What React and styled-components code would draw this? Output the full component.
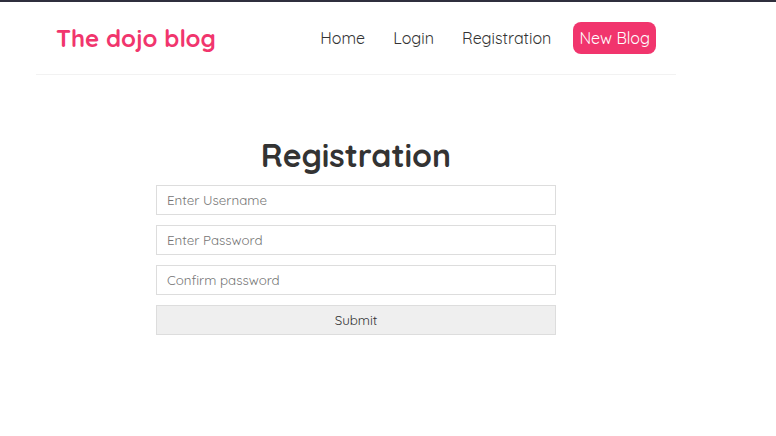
import React from 'react';
import styled, { createGlobalStyle } from 'styled-components';

const GlobalStyle = createGlobalStyle`
  * { margin: 0; box-sizing: border-box; font-family: Quicksand, Lato, sans-serif; }
  body { color: #333; background: #fff; border-top: 2px solid #2f2f3d; }
`;

const Page = styled.div`
  padding: 0 100px 0 36px;
`;

const Navbar = styled.nav`
  display: flex;
  align-items: center;
  padding: 20px;
  border-bottom: 1px solid #f2f2f2;
`;

const Brand = styled.h1`
  font-size: 24px;
  line-height: 32px;
  font-weight: 700;
  color: #f1356d;
`;

const Links = styled.div`
  display: flex;
  margin-left: auto;
  gap: 16px;
`;

const NavLink = styled.a`
  padding: 6px;
  border-radius: 8px;
  font-size: 16px;
  line-height: 20px;
  text-decoration: none;
  color: ${({ $primary }) => ($primary ? '#fff' : '#333')};
  background: ${({ $primary }) => ($primary ? '#f1356d' : 'transparent')};
`;

const Form = styled.form`
  display: flex;
  flex-direction: column;
  gap: 10px;
  max-width: 400px;
  margin: 60px auto 0;
`;

const Title = styled.h2`
  font-size: 32px;
  line-height: 40px;
  font-weight: 700;
  text-align: center;
`;

const Field = styled.input`
  width: 100%;
  height: 30px;
  padding: 6px 10px;
  border: 1px solid #ddd;
  border-radius: 0;
`;

const Submit = styled.button`
  height: 30px;
  border: 1px solid #ddd;
  background: #efefef;
  color: #333;
`;

export default function App() {
  return (
    <Page>
      <GlobalStyle />
      <Navbar>
        <Brand>The dojo blog</Brand>
        <Links>
          <NavLink href="#home">Home</NavLink>
          <NavLink href="#login">Login</NavLink>
          <NavLink href="#registration">Registration</NavLink>
          <NavLink href="#new" $primary>New Blog</NavLink>
        </Links>
      </Navbar>
      <Form>
        <Title>Registration</Title>
        <Field type="text" aria-label="Username" placeholder="Enter Username" />
        <Field type="password" aria-label="Password" placeholder="Enter Password" />
        <Field type="password" aria-label="Confirm password" placeholder="Confirm password" />
        <Submit type="button">Submit</Submit>
      </Form>
    </Page>
  );
}
